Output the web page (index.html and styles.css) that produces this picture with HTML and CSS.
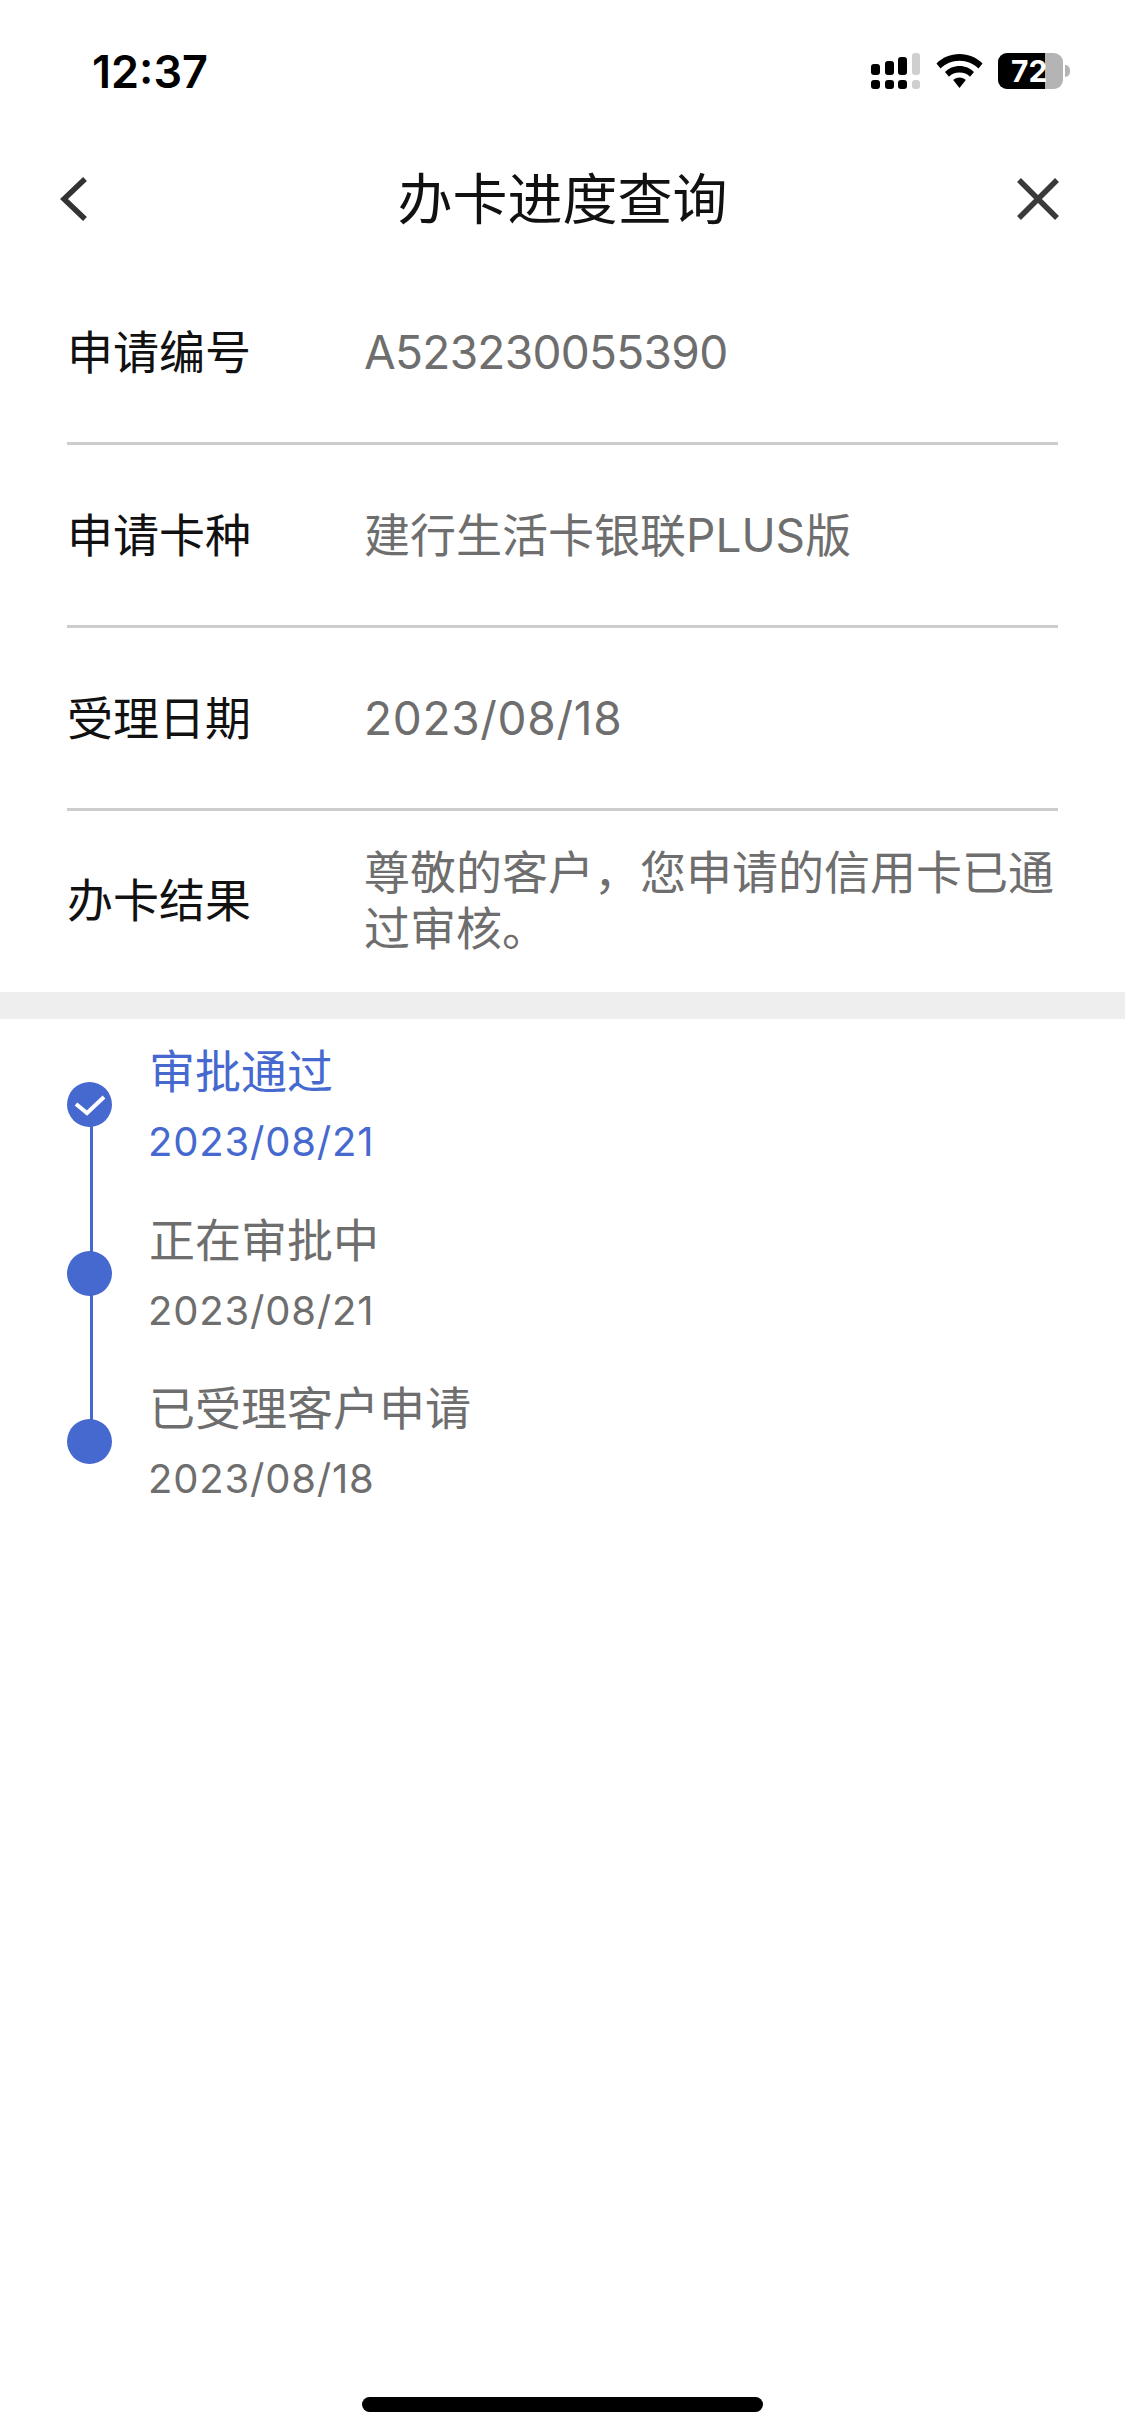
FILE: index.html
```html
<!DOCTYPE html>
<html lang="zh-CN">
<head>
<meta charset="utf-8">
<title>办卡进度查询</title>
<link rel="stylesheet" href="styles.css">
</head>
<body>
<div class="screen">
  <div class="status">
    <span class="time">12:37</span>
    <div class="status-icons">
      <svg class="signal" width="50" height="36" viewBox="0 0 50 36">
        <g fill="#000">
          <rect x="0" y="11" width="9" height="11" rx="3"/><rect x="14" y="8" width="9" height="14" rx="3"/><rect x="27" y="4" width="9" height="18" rx="3"/>
          <rect x="0" y="27" width="9" height="9" rx="3"/><rect x="14" y="27" width="9" height="9" rx="3"/><rect x="27" y="27" width="9" height="9" rx="3"/>
        </g>
        <g fill="#cfcfcf">
          <rect x="41" y="0" width="8" height="22" rx="3"/><rect x="41" y="27" width="8" height="9" rx="3"/>
        </g>
      </svg>
      <svg class="wifi" width="47" height="35" viewBox="0 0 47 35">
        <path fill="#000" d="M23.500 0C14.500 0 6.500 3.500 0.500 9.500L4.500 14.500C9.500 9.500 16 6.700 23.500 6.700C31 6.700 37.500 9.500 42.500 14.500L46.500 9.500C40.500 3.500 32.500 0 23.500 0Z"/>
        <path fill="#000" d="M23.500 12C17.700 12 12.700 14.300 9 18L13 22.800C15.700 20 19.300 18.600 23.500 18.600C27.700 18.600 31.300 20 34 22.800L38 18C34.300 14.300 29.300 12 23.500 12Z"/>
        <path fill="#000" d="M23.500 23.500C21 23.500 18.800 24.500 17.200 26L23.500 34L29.800 26C28.200 24.500 26 23.500 23.500 23.500Z"/>
      </svg>
      <div class="battery">
        <div class="battery-body">
          <span class="battery-level"></span>
          <span class="battery-text">72</span>
        </div>
        <span class="battery-tip"></span>
      </div>
    </div>
  </div>

  <header class="nav">
    <svg class="nav-back" width="27" height="44" viewBox="0 0 27 44"><path d="M25 2L4 22L25 42" fill="none" stroke="#333" stroke-width="5.500"/></svg>
    <h1 class="nav-title">办卡进度查询</h1>
    <svg class="nav-close" width="42" height="42" viewBox="0 0 42 42"><path d="M2 2L40 40M40 2L2 40" fill="none" stroke="#3a3a3a" stroke-width="5.500"/></svg>
  </header>

  <section class="info">
    <div class="row"><span class="label">申请编号</span><span class="value value-id">A523230055390</span></div>
    <div class="row"><span class="label">申请卡种</span><span class="value">建行生活卡银联PLUS版</span></div>
    <div class="row"><span class="label">受理日期</span><span class="value value-date">2023/08/18</span></div>
    <div class="row"><span class="label">办卡结果</span><span class="value">尊敬的客户，您申请的信用卡已通过审核。</span></div>
  </section>

  <div class="band"></div>

  <section class="timeline">
    <div class="step step-done">
      <div class="marker">
        <span class="dot">
          <svg width="32" height="22" viewBox="0 0 32 22"><path d="M2 10L13 19L30 3" fill="none" stroke="#fff" stroke-width="4"/></svg>
        </span>
      </div>
      <div class="step-text"><div class="step-title">审批通过</div><div class="step-date">2023/08/21</div></div>
    </div>
    <div class="step">
      <div class="marker"><span class="dot"></span></div>
      <div class="step-text"><div class="step-title">正在审批中</div><div class="step-date">2023/08/21</div></div>
    </div>
    <div class="step step-last">
      <div class="marker"><span class="dot"></span></div>
      <div class="step-text"><div class="step-title">已受理客户申请</div><div class="step-date">2023/08/18</div></div>
    </div>
  </section>

  <div class="home-bar"></div>
</div>
</body>
</html>
```

FILE: styles.css
```css
* { box-sizing: border-box; margin: 0; padding: 0; }
html, body { background: #fff; }
body { font-family: Inter, "Noto Sans CJK SC", sans-serif; }
.screen { position: relative; width: 1125px; height: 2435px; overflow: hidden; background: #fff; }

.status { height: 140px; display: flex; justify-content: space-between; align-items: flex-start; padding: 44px 55px 0 92px; }
.time { font-weight: 600; font-size: 45px; line-height: 56px; color: #000; }
.status-icons { display: flex; align-items: center; gap: 15px; padding-top: 9px; }
.signal, .wifi { display: block; }
.battery { display: flex; align-items: center; gap: 2px; }
.battery-body { position: relative; width: 65px; height: 36px; border-radius: 9px; background: #b4b4b4; overflow: hidden; }
.battery-level { position: absolute; left: 0; top: 0; bottom: 0; width: 47px; background: #000; }
.battery-text { position: absolute; left: 13px; right: 0; top: 0; font-weight: 700; font-size: 30px; line-height: 36px; color: #fff; }
.battery-tip { width: 5px; height: 12px; background: #b4b4b4; border-radius: 0 6px 6px 0; }

.nav { height: 122px; display: grid; grid-template-columns: 1fr auto 1fr; align-items: center; padding: 0 66px 4px 66px; }
.nav-title { font-weight: 400; font-size: 55px; line-height: 80px; color: #111; }
.nav-back { display: block; justify-self: start; margin-left: -6px; }
.nav-close { display: block; justify-self: end; }

.info { padding: 0 67px 0 67px; }
.row { height: 183px; display: flex; align-items: center; padding-bottom: 1px; border-bottom: 3px solid #cdcdcd; }
.row:last-child { border-bottom: 0; height: 181px; padding-bottom: 3px; }
.label { flex: 0 0 297px; font-size: 46px; line-height: 56px; color: #111; }
.value { flex: 1; font-size: 46px; line-height: 56px; color: #6e6e6e; }
.value-id { letter-spacing: -0.700px; }
.value-date { letter-spacing: 0.700px; }

.band { height: 27px; background: #eee; }

.timeline { padding: 0 0 0 67px; }
.step { display: flex; height: 168.500px; }
.marker { position: relative; width: 82px; flex: none; }
.dot { position: absolute; left: 0; top: 63px; width: 45px; height: 45px; border-radius: 50%; background: #4669cf; display: flex; align-items: center; justify-content: center; }
.marker::after { content: ""; position: absolute; left: 23px; top: 100px; bottom: -70px; width: 3px; background: #4669cf; }
.step-last .marker::after { display: none; }
.step-title { font-size: 46px; line-height: 56px; color: #6e6e6e; padding-top: 24px; }
.step-date { font-size: 40px; line-height: 50px; margin-top: 18px; margin-left: -1px; letter-spacing: 0.800px; color: #6e6e6e; }
.step-done .step-title, .step-done .step-date { color: #4669cf; }

.home-bar { position: absolute; left: 362px; top: 2397px; width: 401px; height: 15px; border-radius: 8px; background: #000; }
```
